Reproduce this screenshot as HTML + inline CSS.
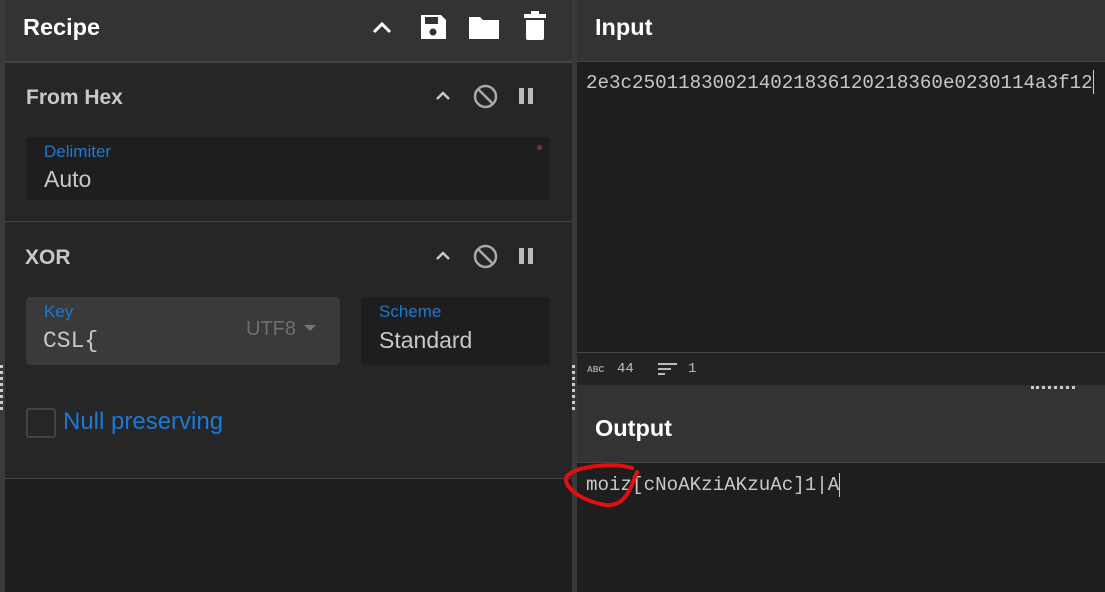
<!DOCTYPE html>
<html><head><style>
*{margin:0;padding:0;box-sizing:border-box}
body{width:1105px;height:592px;background:#1e1e1e;position:relative;overflow:hidden;font-family:"Liberation Sans",sans-serif}
.a{position:absolute}
.mono{font-family:"Liberation Mono",monospace}
.h{font-weight:bold;color:#fff;font-size:23.5px}
.op{font-weight:bold;color:#c8c8c8;font-size:21px}
.lbl{color:#1a7ad6;font-size:17px}
.val{color:#c8c8c8;font-size:23px}
</style></head><body>
<div class="a" style="left:0;top:0;width:5px;height:592px;background:#3a3a3a"></div>
<div class="a" style="left:572px;top:0;width:5px;height:592px;background:#3a3a3a"></div>
<!-- recipe header -->
<div class="a" style="left:5px;top:0;width:567px;height:61px;background:#333"></div>
<div class="a" style="left:5px;top:61px;width:567px;height:2px;background:#444"></div>
<div class="a h" style="left:23px;top:14px">Recipe</div>
<svg class="a" style="left:370px;top:16px" width="24" height="24" viewBox="0 0 24 24"><path d="M4 16l8-8 8 8" stroke="#fff" stroke-width="3" fill="none"/></svg>
<svg class="a" style="left:418px;top:12px" width="30" height="30" viewBox="0 0 30 30"><path d="M3 3h20l5 5v19H3z" fill="#fff"/><rect x="7" y="5" width="13" height="7" fill="#333"/><circle cx="15" cy="20" r="3.5" fill="#333"/></svg>
<svg class="a" style="left:468px;top:14px" width="32" height="26" viewBox="0 0 32 26"><path d="M1 3h11l3 3h16v19H1z" fill="#fff"/></svg>
<svg class="a" style="left:522px;top:11px" width="26" height="30" viewBox="0 0 26 30"><rect x="2" y="3" width="22" height="4" fill="#fff"/><rect x="9" y="0" width="8" height="4" fill="#fff"/><path d="M4 9h18v18q0 2-2 2H6q-2 0-2-2z" fill="#fff"/></svg>
<!-- From Hex -->
<div class="a" style="left:5px;top:63px;width:567px;height:158px;background:#262626"></div>
<div class="a" style="left:5px;top:221px;width:567px;height:1px;background:#444"></div>
<div class="a op" style="left:26px;top:86px">From Hex</div>
<svg class="a" style="left:434px;top:88px" width="18" height="16" viewBox="0 0 18 16"><path d="M3 11l6-6 6 6" stroke="#c8c8c8" stroke-width="2.5" fill="none"/></svg>
<svg class="a" style="left:473px;top:84px" width="25" height="25" viewBox="0 0 25 25"><circle cx="12.5" cy="12.5" r="10.5" stroke="#aaa" stroke-width="2.5" fill="none"/><path d="M5 5l15 15" stroke="#aaa" stroke-width="2.5"/></svg>
<div class="a" style="left:519px;top:88px;width:5px;height:16px;background:#bbb"></div>
<div class="a" style="left:528px;top:88px;width:5px;height:16px;background:#bbb"></div>
<div class="a" style="left:26px;top:137px;width:524px;height:63px;background:#1e1e1e;border-radius:4px"></div>
<div class="a" style="left:537px;top:145px;width:5px;height:5px;border-radius:50%;background:#6b3a2a"></div>
<div class="a lbl" style="left:44px;top:142px">Delimiter</div>
<div class="a val" style="left:44px;top:166px">Auto</div>
<!-- XOR -->
<div class="a" style="left:5px;top:222px;width:567px;height:256px;background:#262626"></div>
<div class="a" style="left:5px;top:478px;width:567px;height:1px;background:#444"></div>
<div class="a op" style="left:25px;top:246px">XOR</div>
<svg class="a" style="left:434px;top:248px" width="18" height="16" viewBox="0 0 18 16"><path d="M3 11l6-6 6 6" stroke="#c8c8c8" stroke-width="2.5" fill="none"/></svg>
<svg class="a" style="left:473px;top:244px" width="25" height="25" viewBox="0 0 25 25"><circle cx="12.5" cy="12.5" r="10.5" stroke="#aaa" stroke-width="2.5" fill="none"/><path d="M5 5l15 15" stroke="#aaa" stroke-width="2.5"/></svg>
<div class="a" style="left:519px;top:248px;width:5px;height:16px;background:#bbb"></div>
<div class="a" style="left:528px;top:248px;width:5px;height:16px;background:#bbb"></div>
<div class="a" style="left:26px;top:297px;width:314px;height:68px;background:#3a3a3a;border-radius:4px"></div>
<div class="a lbl" style="left:44px;top:302px">Key</div>
<div class="a val mono" style="left:43px;top:328px;font-size:23px">CSL{</div>
<div class="a" style="left:246px;top:318px;color:#6f6f6f;font-size:20px">UTF8</div>
<div class="a" style="left:304px;top:325px;border-left:6px solid transparent;border-right:6px solid transparent;border-top:6px solid #777"></div>
<div class="a" style="left:361px;top:297px;width:189px;height:68px;background:#1e1e1e;border-radius:4px"></div>
<div class="a lbl" style="left:379px;top:302px">Scheme</div>
<div class="a val" style="left:379px;top:327px">Standard</div>
<div class="a" style="left:26px;top:408px;width:30px;height:30px;border:2px solid #444;border-radius:3px"></div>
<div class="a" style="left:63px;top:408px;color:#1a7ad6;font-size:24px">Null preserving</div>
<div class="a" style="left:0;top:365px;width:4px;height:45px;border-left:3px dotted #ccc"></div>
<div class="a" style="left:572px;top:365px;width:4px;height:45px;border-left:3px dotted #ccc"></div>
<!-- Input -->
<div class="a" style="left:577px;top:0;width:528px;height:61px;background:#333"></div>
<div class="a" style="left:577px;top:61px;width:528px;height:1px;background:#444"></div>
<div class="a h" style="left:595px;top:14px">Input</div>
<div class="a mono" style="left:586px;top:72px;color:#c8c8c8;font-size:19.2px">2e3c250118300214021836120218360e0230114a3f12</div>
<div class="a" style="left:1093px;top:70px;width:1px;height:24px;background:#ccc"></div>
<div class="a" style="left:577px;top:352px;width:528px;height:1px;background:#444"></div>
<div class="a" style="left:577px;top:353px;width:528px;height:32px;background:#232323"></div>
<div class="a" style="left:587px;top:365px;color:#aaa;font-size:8px;font-weight:bold">ABC</div>
<div class="a mono" style="left:617px;top:361px;color:#bbb;font-size:14px">44</div>
<div class="a" style="left:658px;top:363px;width:19px;height:2px;background:#bbb"></div>
<div class="a" style="left:658px;top:368px;width:13px;height:2px;background:#bbb"></div>
<div class="a" style="left:658px;top:373px;width:7px;height:2px;background:#bbb"></div>
<div class="a mono" style="left:688px;top:361px;color:#bbb;font-size:14px">1</div>
<div class="a" style="left:577px;top:385px;width:528px;height:77px;background:#333"></div>
<div class="a" style="left:1031px;top:386px;width:44px;height:3px;border-top:3px dotted #ccc"></div>
<div class="a" style="left:577px;top:462px;width:528px;height:1px;background:#444"></div>
<div class="a h" style="left:595px;top:415px">Output</div>
<div class="a mono" style="left:586px;top:474px;color:#c8c8c8;font-size:19.2px">moiz[cNoAKziAKzuAc]1|A</div>
<div class="a" style="left:839px;top:473px;width:1px;height:24px;background:#ccc"></div>
<svg class="a" style="left:560px;top:460px" width="90" height="55" viewBox="0 0 90 55"><path d="M72 8C55 3 20 5 8 15C0 24 18 40 45 45C65 47 70 30 77 12" stroke="#e01010" stroke-width="4" fill="none" stroke-linecap="round"/></svg>
</body></html>
